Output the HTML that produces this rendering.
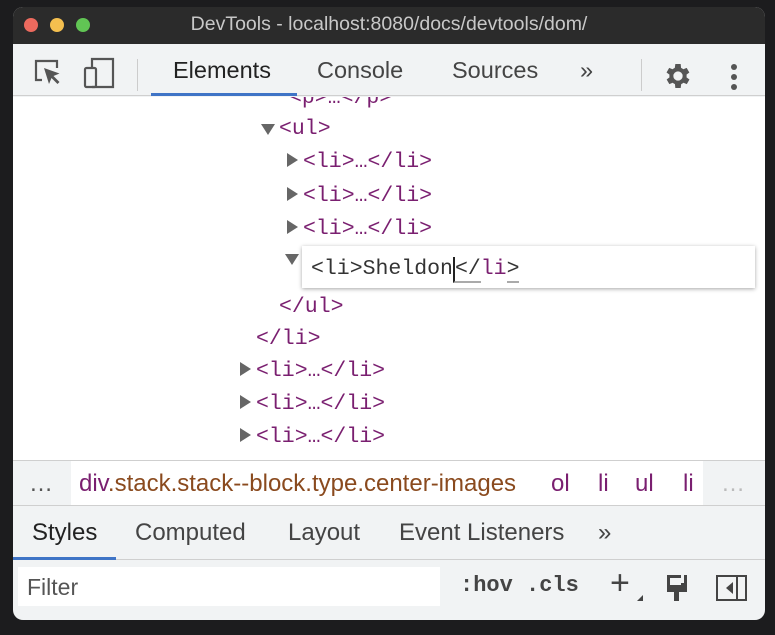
<!DOCTYPE html>
<html><head><meta charset="utf-8"><style>
*{margin:0;padding:0;box-sizing:border-box}
body{width:775px;height:635px;background:#1c1c1e;position:relative;overflow:hidden;font-family:"Liberation Sans",sans-serif}
.win{position:absolute;left:13px;top:7px;width:752px;height:613px;background:#f1f3f4;border-radius:10px;overflow:hidden}
.title{position:absolute;left:0;top:0;width:100%;height:37px;background:#2b2b2b;color:#c8c8c8;font-size:19.5px;text-align:center;line-height:34px}
.dot{position:absolute;top:11px;width:14px;height:14px;border-radius:50%}
.tb{position:absolute;left:0;top:37px;width:100%;height:52px;background:#f1f3f4;border-bottom:1px solid #cfcfcf}
.t{position:absolute;font-size:23.5px;color:#444;top:13px}
.dom{position:absolute;left:0;top:90px;width:100%;height:363px;background:#fff;overflow:hidden}
.ln{position:absolute;font-family:"Liberation Mono",monospace;font-size:21.5px;color:#7a1f70;white-space:pre}
.ar{position:absolute;width:0;height:0}
.r{border-top:7px solid transparent;border-bottom:7px solid transparent;border-left:11px solid #666}
.d{border-left:7px solid transparent;border-right:7px solid transparent;border-top:11px solid #666}
.bc{position:absolute;left:0;top:453px;width:100%;height:46px;background:#f1f3f4;border-top:1px solid #cfcfcf;border-bottom:1px solid #cfcfcf;font-size:24px}
.st{position:absolute;left:0;top:499px;width:100%;height:54px;border-bottom:1px solid #cfcfcf}
.fl{position:absolute;left:0;top:553px;width:100%;height:60px}
</style></head><body>
<div class="win">
 <div class="title">DevTools - localhost:8080/docs/devtools/dom/
  <div class="dot" style="left:11px;background:#ec6a5e"></div>
  <div class="dot" style="left:37px;background:#f4bf4f"></div>
  <div class="dot" style="left:63px;background:#61c554"></div>
 </div>
 <div class="tb">
  <svg style="position:absolute;left:20px;top:14px" width="30" height="30" viewBox="0 0 30 30"><path d="M9 22H3V3h21v7" fill="none" stroke="#555" stroke-width="2.2"/><path d="M11 10l5 16 2.5-6 6 6 2-2-6-6 6-2.5z" fill="#555"/></svg>
  <svg style="position:absolute;left:70px;top:13px" width="32" height="32" viewBox="0 0 32 32"><path d="M9 10V2h21v28H9" fill="none" stroke="#555" stroke-width="2.2"/><rect x="2" y="11" width="11" height="19" rx="1.5" fill="none" stroke="#555" stroke-width="2.2"/></svg>
  <div style="position:absolute;left:124px;top:15px;width:1px;height:32px;background:#ccc"></div>
  <div class="t" style="left:160px;color:#222">Elements</div>
  <div style="position:absolute;left:138px;top:49px;width:146px;height:3px;background:#3f74c6"></div>
  <div class="t" style="left:304px">Console</div>
  <div class="t" style="left:439px">Sources</div>
  <div class="t" style="left:567px">»</div>
  <div style="position:absolute;left:628px;top:15px;width:1px;height:32px;background:#ccc"></div>
  <svg style="position:absolute;left:649px;top:16px" width="32" height="32" viewBox="0 0 24 24"><path fill="#555" d="M19.4 13a7.5 7.5 0 000-2l2.1-1.6-2-3.5-2.5 1a7 7 0 00-1.7-1L15 3h-4l-.4 2.9a7 7 0 00-1.7 1l-2.5-1-2 3.5L6.6 11a7.5 7.5 0 000 2l-2.1 1.6 2 3.5 2.5-1a7 7 0 001.7 1L11 21h4l.4-2.9a7 7 0 001.7-1l2.5 1 2-3.5zM13 15.5a3.5 3.5 0 110-7 3.5 3.5 0 010 7z" transform="translate(-1 0)"/></svg>
  <div style="position:absolute;left:718px;top:20px;width:6px;height:6px;border-radius:50%;background:#555"></div>
  <div style="position:absolute;left:718px;top:30px;width:6px;height:6px;border-radius:50%;background:#555"></div>
  <div style="position:absolute;left:718px;top:40px;width:6px;height:6px;border-radius:50%;background:#555"></div>
 </div>
 <div class="dom">
  <div class="ln" style="left:276px;top:-11px">&lt;p&gt;…&lt;/p&gt;</div>
  <div class="ar d" style="left:248px;top:27px"></div><div class="ln" style="left:266px;top:20px">&lt;ul&gt;</div>
  <div class="ar r" style="left:274px;top:56px"></div><div class="ln" style="left:290px;top:53px">&lt;li&gt;…&lt;/li&gt;</div>
  <div class="ar r" style="left:274px;top:90px"></div><div class="ln" style="left:290px;top:87px">&lt;li&gt;…&lt;/li&gt;</div>
  <div class="ar r" style="left:274px;top:123px"></div><div class="ln" style="left:290px;top:120px">&lt;li&gt;…&lt;/li&gt;</div>
  <div class="ar d" style="left:272px;top:157px"></div>
  <div style="position:absolute;left:289px;top:149px;width:453px;height:42px;background:#fff;box-shadow:0 1px 4px rgba(0,0,0,.35)"></div>
  <div class="ln" style="left:298px;top:160px;color:#333">&lt;li&gt;Sheldon<span style="border-left:2px solid #222;border-bottom:2px solid #aaa">&lt;/</span><span style="color:#7a1f70">li</span><span style="border-bottom:2px solid #aaa">&gt;</span></div>
  <div class="ln" style="left:266px;top:198px">&lt;/ul&gt;</div>
  <div class="ln" style="left:243px;top:230px">&lt;/li&gt;</div>
  <div class="ar r" style="left:227px;top:265px"></div><div class="ln" style="left:243px;top:262px">&lt;li&gt;…&lt;/li&gt;</div>
  <div class="ar r" style="left:227px;top:298px"></div><div class="ln" style="left:243px;top:295px">&lt;li&gt;…&lt;/li&gt;</div>
  <div class="ar r" style="left:227px;top:331px"></div><div class="ln" style="left:243px;top:328px">&lt;li&gt;…&lt;/li&gt;</div>
 </div>
 <div class="bc">
  <div style="position:absolute;left:16px;top:9px;color:#555">…</div>
  <div style="position:absolute;left:58px;top:0;width:632px;height:44px;background:#fff"></div>
  <div style="position:absolute;left:66px;top:9px;color:#7a1f70">div<span style="color:#8a4a1e">.stack.stack--block.type.center-images</span></div>
  <div style="position:absolute;left:538px;top:9px;color:#7a1f70">ol</div>
  <div style="position:absolute;left:585px;top:9px;color:#7a1f70">li</div>
  <div style="position:absolute;left:622px;top:9px;color:#7a1f70">ul</div>
  <div style="position:absolute;left:670px;top:9px;color:#7a1f70">li</div>
  <div style="position:absolute;left:708px;top:9px;color:#bbb">…</div>
 </div>
 <div class="st">
  <div class="t" style="left:19px;color:#222;font-size:24px">Styles</div>
  <div style="position:absolute;left:0;top:51px;width:103px;height:3px;background:#3f74c6"></div>
  <div class="t" style="left:122px;font-size:24px">Computed</div>
  <div class="t" style="left:275px;font-size:24px">Layout</div>
  <div class="t" style="left:386px;font-size:24px">Event Listeners</div>
  <div class="t" style="left:585px;font-size:24px">»</div>
 </div>
 <div class="fl">
  <div style="position:absolute;left:5px;top:7px;width:422px;height:39px;background:#fff"></div>
  <div style="position:absolute;left:14px;top:14px;font-size:23px;color:#555">Filter</div>
  <div style="position:absolute;left:447px;top:13px;font-family:'Liberation Mono',monospace;font-weight:bold;font-size:22px;color:#444">:hov&nbsp;.cls</div>
  <div style="position:absolute;left:597px;top:4px;font-size:34px;color:#444">+</div>
  <div style="position:absolute;left:624px;top:35px;width:0;height:0;border-left:6px solid transparent;border-bottom:6px solid #444"></div>
  <svg style="position:absolute;left:652px;top:13px" width="24" height="30" viewBox="0 0 24 30"><path d="M2 2h20v13H2z M2 15h20v4H14v9h-5v-9H2z" fill="#444"/><rect x="5" y="5" width="11" height="7" fill="#f1f3f4"/><rect x="16" y="2" width="3" height="8" fill="#f1f3f4"/></svg>
  <svg style="position:absolute;left:703px;top:15px" width="31" height="26" viewBox="0 0 31 26"><rect x="1" y="1" width="29" height="24" fill="none" stroke="#444" stroke-width="2"/><line x1="21" y1="1" x2="21" y2="25" stroke="#444" stroke-width="2"/><path d="M17 7v12l-7-6z" fill="#444"/></svg>
 </div>
</div>
</body></html>
